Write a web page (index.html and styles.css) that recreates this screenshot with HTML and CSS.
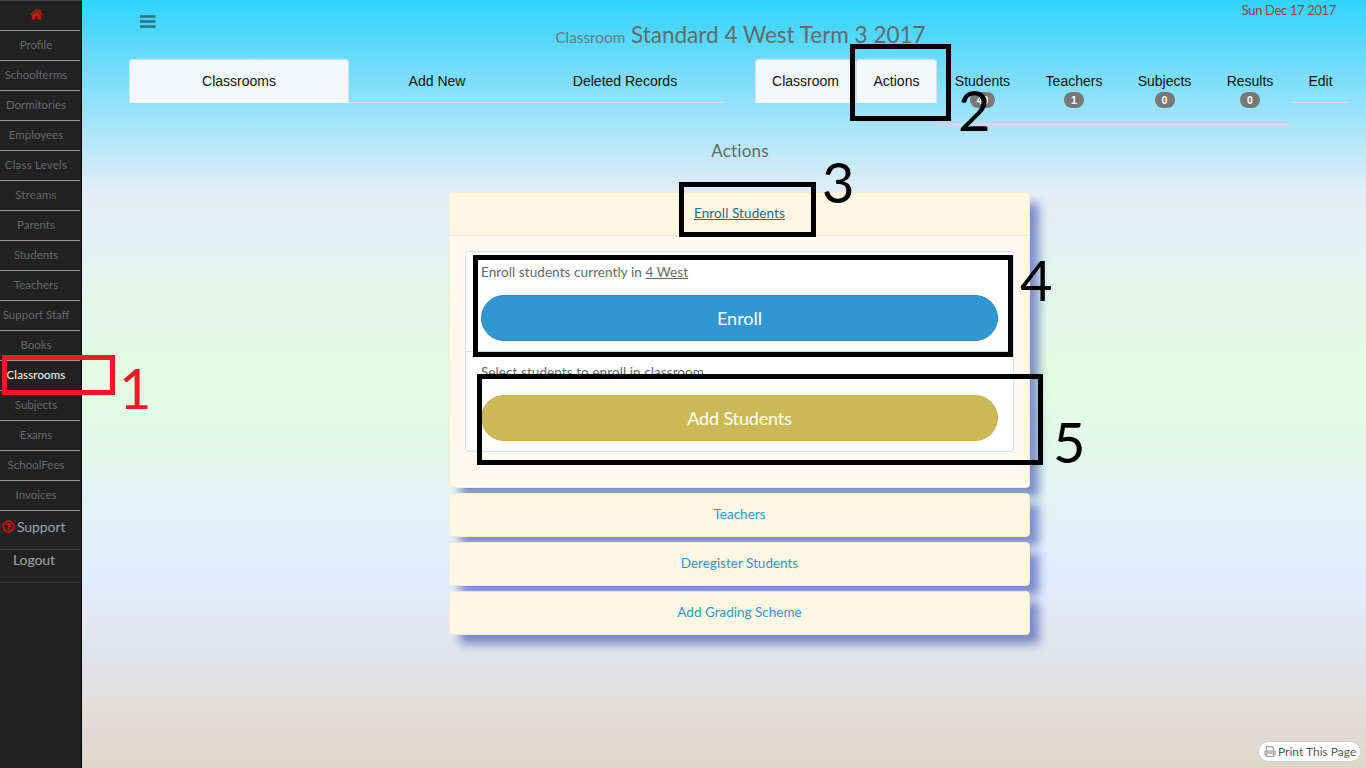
FILE: index.html
```html
<!DOCTYPE html>
<html lang="en">
<head>
<meta charset="utf-8">
<title>Classroom</title>
<link rel="stylesheet" href="styles.css">
</head>
<body>
<div class="app">
  <nav class="sidebar">
    <a class="item home"><svg width="13" height="11" viewBox="0 0 13 11"><path fill="#d2100f" d="M6.500 0 L9 2.100 V.7 H11 V3.800 L13 5.500 L12.200 6.400 L6.500 1.600 L.8 6.400 L0 5.500Z M6.500 2.200 L11.200 6.200 V10.400 H7.500 V7.400 H5.500 V10.400 H1.800 V6.200Z"/></svg></a>
    <a class="item">Profile</a>
    <a class="item i-terms">Schoolterms</a>
    <a class="item">Dormitories</a>
    <a class="item">Employees</a>
    <a class="item i-levels">Class Levels</a>
    <a class="item i-wide">Streams</a>
    <a class="item">Parents</a>
    <a class="item">Students</a>
    <a class="item">Teachers</a>
    <a class="item">Support Staff</a>
    <a class="item">Books</a>
    <a class="item active">Classrooms</a>
    <a class="item">Subjects</a>
    <a class="item">Exams</a>
    <a class="item">SchoolFees</a>
    <a class="item">Invoices</a>
    <a class="big support"><svg width="13" height="13" viewBox="0 0 13 13"><circle cx="6.500" cy="6.500" r="5.300" fill="none" stroke="#d2100f" stroke-width="1.700"/><path d="M4.500 5.200 C4.600 3.100 8.600 3.100 8.400 5.200 C8.300 6.300 6.600 6.300 6.600 7.700" fill="none" stroke="#d2100f" stroke-width="1.900"/><path d="M5.600 8.400h2v1.700h-2z" fill="#d2100f"/></svg><span>Support</span></a>
    <a class="big logout">Logout</a>
  </nav>
  <main class="main">
    <header class="top">
      <svg class="burger" width="16" height="14" viewBox="0 0 16 14"><path d="M0 1.500h15.500M0 6.500h15.500M0 11.500h15.500" stroke="#2b7184" stroke-width="2.600"/></svg>
      <span class="date">Sun Dec 17 2017</span>
      <h1 class="title"><small>Classroom</small> <span>Standard 4 West Term 3 2017</span></h1>
    </header>
    <div class="navs">
      <ul class="tabs left">
        <li class="tab on">Classrooms</li>
        <li class="tab">Add New</li>
        <li class="tab">Deleted Records</li>
      </ul>
      <ul class="tabs right">
        <li class="tab on">Classroom</li>
        <li class="tab on">Actions</li>
        <li class="tab">Students<b class="badge">40</b></li>
        <li class="tab">Teachers<b class="badge">1</b></li>
        <li class="tab">Subjects<b class="badge">0</b></li>
        <li class="tab">Results<b class="badge">0</b></li>
        <li class="tab">Edit</li>
      </ul>
    </div>
    <h2 class="subtitle">Actions</h2>
    <section class="group">
      <div class="panel">
        <div class="head open"><a>Enroll Students</a></div>
        <div class="body">
          <div class="list">
            <div class="row"><p class="p1">Enroll students currently in <u>4 West</u></p><button class="btn blue">Enroll</button></div>
            <div class="row"><p class="p2">Select students to enroll in classroom</p><button class="btn gold">Add Students</button></div>
          </div>
        </div>
      </div>
      <div class="panel"><div class="head">Teachers</div></div>
      <div class="panel"><div class="head">Deregister Students</div></div>
      <div class="panel"><div class="head">Add Grading Scheme</div></div>
    </section>
  </main>
</div>
<button class="print"><svg width="12" height="11" viewBox="0 0 12 11"><path d="M2.500 5V.6H8L9.500 2V5M1 8.500V5.500Q1 5 1.600 5H10.400Q11 5 11 5.500V8.500H9.500M1 8.500H2.500M2.500 7H9.500V10.400H2.500Z" fill="none" stroke="#a5a5a5" stroke-width="1.300"/></svg><span>Print This Page</span></button>
<div class="mark m1"></div><div class="num n1">1</div>
<div class="mark m2"></div><div class="num n2">2</div>
<div class="mark m3"></div><div class="num n3">3</div>
<div class="mark m4"></div><div class="num n4">4</div>
<div class="mark m5"></div><div class="num n5">5</div>
</body>
</html>
```
FILE: styles.css
```css
* { box-sizing: border-box; }
body { margin: 0; height: 768px; overflow: hidden; position: relative; font-family: Lato, "Noto Sans", sans-serif; font-size: 14px; color: #626a6c;
  background: linear-gradient(#30d3fd 0, #93e2f9 13.500%, #e4edf8 25%, #e3fde2 50%, #e2edff 75%, #e0d6cb 100%); }
.app { display: flex; height: 768px; }
.sidebar { width: 82px; flex: none; background: #222; border-right: 1px solid #000; border-top: 1px solid #444; display: flex; flex-direction: column; }
.item { display: block; width: 80px; height: 30px; line-height: 27px; border-bottom: 1px solid #999; padding-right: 8px; text-align: center; font-size: 11.500px; color: #646a6b; white-space: nowrap; }
.home { line-height: 29px; }
.i-levels { letter-spacing: .2px; }
.i-wide { letter-spacing: .15px; }
.item.active { color: #fff; letter-spacing: .15px; }
.big { color: #a4a4a4; border-bottom: 1px solid #373737; font-size: 14px; white-space: nowrap; }
.support { height: 39px; padding: 7px 0 0 2px; line-height: 17px; display: flex; align-items: flex-start; gap: 2px; letter-spacing: -.1px; }
.support svg { margin-top: 2px; }
.logout { height: 33px; line-height: 19px; padding-left: 13px; letter-spacing: -.1px; }
.main { flex: 1; min-width: 0; }
.top { display: grid; grid-template-columns: 1fr auto; grid-template-rows: 29px 26px; height: 59px; padding: 0 30px 0 58px; }
.burger { margin-top: 15px; }
.date { color: #a23d42; font-size: 13px; letter-spacing: -.35px; line-height: 20px; height: 20px; }
.title { grid-column: 1 / -1; margin: -7px 0 0; font-weight: 400; font-size: 22.500px; line-height: 26px; text-align: center; color: #626a6c; padding-left: 5px; white-space: nowrap; }
.title small { font-size: 15.300px; color: #70777b; }
.navs { display: flex; padding-left: 47px; height: 66px; gap: 31px; align-items: flex-start; }
.tabs { list-style: none; margin: 0; padding: 0; display: flex; align-items: flex-start; font: 14px/20px "Liberation Sans", Arial, sans-serif; color: #111; }
.tab { height: 44px; padding-top: 12px; text-align: center; border-bottom: 1px solid #d9dddf; display: flex; flex-direction: column; align-items: center; white-space: nowrap; }
.tab.on { background: #f4f8fb; border: 1px solid #d9dfe2; border-bottom-color: #f4f8fb; padding-top: 11px; border-radius: 4px 4px 0 0; }
.left .tab:nth-child(1) { width: 220px; }
.left .tab:nth-child(2) { width: 176px; }
.left .tab:nth-child(3) { width: 199px; padding-left: 1px; }
.right .tab:nth-child(1) { width: 101px; }
.right .tab:nth-child(2) { width: 81px; }
.right .tab:nth-child(3) { width: 91px; height: 66px; }
.right .tab:nth-child(4) { width: 92px; height: 66px; }
.right .tab:nth-child(5) { width: 89px; height: 66px; }
.right .tab:nth-child(6) { width: 82px; height: 66px; }
.right .tab:nth-child(7) { width: 59px; }
.badge { background: #777; color: #fff; font: bold 10.500px/16px "Liberation Sans", Arial, sans-serif; height: 16px; min-width: 20px; padding: 0 7px; border-radius: 8px; margin-top: 1px; }
.subtitle { margin: 15px 0 0; padding-left: 32px; font-weight: 400; font-size: 17px; letter-spacing: .2px; line-height: 22px; text-align: center; color: #626a6c; }
.group { width: 581px; margin: 30px 0 0 367px; display: flex; flex-direction: column; gap: 5px; }
.panel { border: 1px solid #f8eacb; border-radius: 4px; background: #fffaef; box-shadow: 10px 10px 10px -1px rgba(42,65,170,.56); }
.head { background: #fdf7e3; height: 42px; line-height: 41px; text-align: center; color: #3097d1; border-radius: 3px; font-size: 13.500px; }
.head.open { height: 43px; border-bottom: 1px solid #f8eacb; color: #216a94; border-radius: 3px 3px 0 0; letter-spacing: .1px; }
.head.open a { text-decoration: underline; }
.body { padding: 15px 15px 35px; }
.list { border: 1px solid #d3e0e9; border-radius: 4px; background: #fff; }
.row { height: 99px; padding: 10px 15px; }
.row + .row { border-top: 1px solid #d3e0e9; height: 100px; }
.row p { margin: 0 0 13px; line-height: 20px; font-size: 13.500px; letter-spacing: .08px; white-space: nowrap; }
.btn { display: block; width: 517px; height: 46px; border-radius: 23px; font: 18px Lato, sans-serif; color: #fff; padding: 0 0 1px; }
.gold { letter-spacing: -.15px; }
.blue { background: #3097d1; border: 1px solid #2a88bd; }
.gold { background: #cbb956; border: 1px solid #c3b048; }
.print { position: absolute; left: 1258px; top: 741px; width: 103px; height: 21px; border: 1px solid #ccd0d2; border-radius: 11px; background: #fff; padding: 0 0 1px 5px; display: flex; align-items: center; gap: 2px; font: 12px Lato, sans-serif; color: #555b5e; white-space: nowrap; }
.mark { position: absolute; border: 5px solid #000; }
.m1 { left: 2px; top: 355px; width: 113px; height: 40px; border-color: #ed1c24; }
.m2 { left: 850px; top: 44px; width: 101px; height: 77px; }
.m3 { left: 679px; top: 182px; width: 137px; height: 55px; }
.m4 { left: 473px; top: 255px; width: 540px; height: 102px; }
.m5 { left: 477px; top: 374px; width: 566px; height: 91px; }
.num { position: absolute; font-size: 56px; line-height: 60px; color: #000; }
.n1 { left: 119px; top: 358px; color: #ed1c24; }
.n2 { left: 958px; top: 80px; }
.n3 { left: 822px; top: 152px; }
.n4 { left: 1020px; top: 250px; }
.n5 { left: 1053px; top: 412px; }
```
